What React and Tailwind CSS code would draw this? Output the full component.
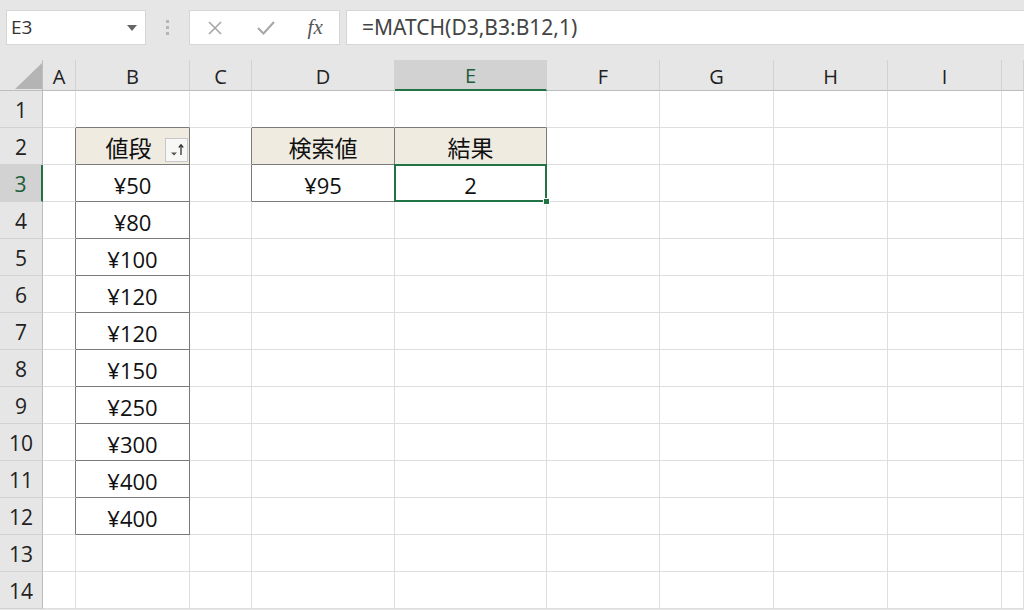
import React from 'react';

const COLS = ['A', 'B', 'C', 'D', 'E', 'F', 'G', 'H', 'I', ''];
const WIDTHS = '43px 33px 114px 62px 143px 152px 113px 114px 114px 114px 1fr';

const HEAD = 'bg-[#efebe1]';

// values keyed by "col+row"
const cells = {
  B2: { text: '値段', head: true, filter: true },
  D2: { text: '検索値', head: true },
  E2: { text: '結果', head: true },
  D3: { text: '¥95' },
  E3: { text: '2', selected: true },
};
['¥50', '¥80', '¥100', '¥120', '¥120', '¥150', '¥250', '¥300', '¥400', '¥400'].forEach((v, i) => {
  cells['B' + (i + 3)] = { text: v };
});

function inTable(c, r) {
  if (c === 'B' && r >= 2 && r <= 12) return true;
  if ((c === 'D' || c === 'E') && r >= 2 && r <= 3) return true;
  return false;
}

function nextCol(c) {
  const i = COLS.indexOf(c);
  return COLS[i + 1];
}

function Cell({ col, row }) {
  const data = cells[col + row];
  const darkRight = inTable(col, row) || inTable(nextCol(col), row);
  const darkBottom = inTable(col, row) || inTable(col, row + 1);
  return (
    <div
      className={`relative flex items-center justify-center pt-[4px] border-r border-b ${data && data.selected ? 'z-10' : ''} ${darkRight ? 'border-r-[#7a7a7a]' : 'border-r-[#dedede]'} ${darkBottom ? 'border-b-[#7a7a7a]' : 'border-b-[#dedede]'} ${data && data.head ? HEAD : 'bg-white'}`}
    >
      {data && (
        <span
          className={`${data.head ? 'text-[23px]' : 'text-[22px]'} text-[#111] leading-none`}
          style={{ paddingRight: data.filter ? 8 : 0 }}
        >
          {data.text}
        </span>
      )}
      {data && data.filter && (
        <div className="absolute right-[1px] top-[10px] w-[23px] h-[24px] bg-[#f7f7f5] border border-[#c8c8c8] flex items-center justify-center">
          <svg width="18" height="16" viewBox="0 0 18 16">
            <path d="M3 10.5 L9 10.5 L6 13.5 Z" fill="#555" />
            <path d="M13 3 L13 13" stroke="#333" strokeWidth="1.3" />
            <path d="M10.8 5.5 L13 2.8 L15.2 5.5" fill="none" stroke="#333" strokeWidth="1.3" />
          </svg>
        </div>
      )}
      {data && data.selected && (
        <>
          <div className="absolute -left-[1px] -top-[1px] -right-[1px] -bottom-[1px] border-2 border-[#217346]" />
          <div className="absolute -right-[4px] -bottom-[4px] w-[7px] h-[7px] bg-[#217346] border border-white" />
        </>
      )}
    </div>
  );
}

export default function App() {
  const rows = Array.from({ length: 14 }, (_, i) => i + 1);
  return (
    <div
      className="w-[1024px] h-[610px] overflow-hidden bg-[#e6e6e6] flex flex-col"
      style={{ fontFamily: '"Open Sans", "Noto Sans CJK JP", sans-serif' }}
    >
      {/* formula bar */}
      <div className="h-[60px] flex items-start pt-[10px] pl-[6px]">
        <div className="w-[140px] h-[35px] bg-white border border-[#d6d6d6] flex items-center justify-between pl-[4px] pr-[8px]">
          <span className="text-[19px] text-[#333]">E3</span>
          <svg width="10" height="6" viewBox="0 0 10 6">
            <path d="M0 0 L10 0 L5 6 Z" fill="#666" />
          </svg>
        </div>
        <div className="w-[43px] h-[35px] flex flex-col items-center justify-center gap-[3px]">
          <div className="w-[3px] h-[3px] bg-[#b5b5b5]" />
          <div className="w-[3px] h-[3px] bg-[#b5b5b5]" />
          <div className="w-[3px] h-[3px] bg-[#b5b5b5]" />
        </div>
        <div className="w-[151px] h-[35px] bg-white border border-[#d6d6d6] flex items-center">
          <div className="w-[50px] flex justify-center">
            <svg width="16" height="16" viewBox="0 0 16 16">
              <path d="M2 2 L14 14 M14 2 L2 14" stroke="#a6a6a6" strokeWidth="1.6" />
            </svg>
          </div>
          <div className="w-[52px] flex justify-center">
            <svg width="20" height="16" viewBox="0 0 20 16">
              <path d="M2 8 L7.5 13.5 L18 2" fill="none" stroke="#a6a6a6" strokeWidth="2" />
            </svg>
          </div>
          <div className="w-[48px] flex justify-center">
            <span className="text-[21px] italic text-[#555]" style={{ fontFamily: '"Liberation Serif", serif' }}>
              fx
            </span>
          </div>
        </div>
        <div className="ml-[6px] flex-1 h-[35px] bg-white border-y border-l border-[#d6d6d6] flex items-center pl-[15px]">
          <span className="text-[21px] text-[#444]" style={{ fontFamily: '"Noto Sans", sans-serif' }}>
            =MATCH(D3,B3:B12,1)
          </span>
        </div>
      </div>

      {/* sheet */}
      <div className="grid bg-white" style={{ gridTemplateColumns: WIDTHS, gridTemplateRows: '31px repeat(14, 37px)' }}>
        <div className="bg-[#e6e6e6] border-r border-b border-[#bdbdbd] relative">
          <svg className="absolute left-[15px] top-[3px]" width="27" height="26" viewBox="0 0 27 26">
            <path d="M27 0 L27 26 L0 26 Z" fill="#b4b4b4" />
          </svg>
        </div>
        {COLS.map((c, i) => (
          <div
            key={'h' + i}
            className={`flex items-center justify-center pt-[3px] text-[20px] border-r border-r-[#d2d2d2] border-b ${c === 'E' ? 'bg-[#d2d2d2] text-[#1e5e3a] border-b-2 border-b-[#217346]' : 'bg-[#e6e6e6] text-[#222] border-b-[#bdbdbd]'}`}
          >
            {c}
          </div>
        ))}
        {rows.map((r) => (
          <React.Fragment key={r}>
            <div
              className={`flex items-center justify-center pt-[4px] text-[21px] border-b border-b-[#d2d2d2] ${r === 3 ? 'bg-[#d2d2d2] text-[#1e5e3a] border-r-2 border-r-[#217346]' : 'bg-[#e6e6e6] text-[#222] border-r border-r-[#bdbdbd]'}`}
            >
              {r}
            </div>
            {COLS.map((c, i) => (
              <Cell key={c + i} col={c || 'J'} row={r} />
            ))}
          </React.Fragment>
        ))}
      </div>
    </div>
  );
}
